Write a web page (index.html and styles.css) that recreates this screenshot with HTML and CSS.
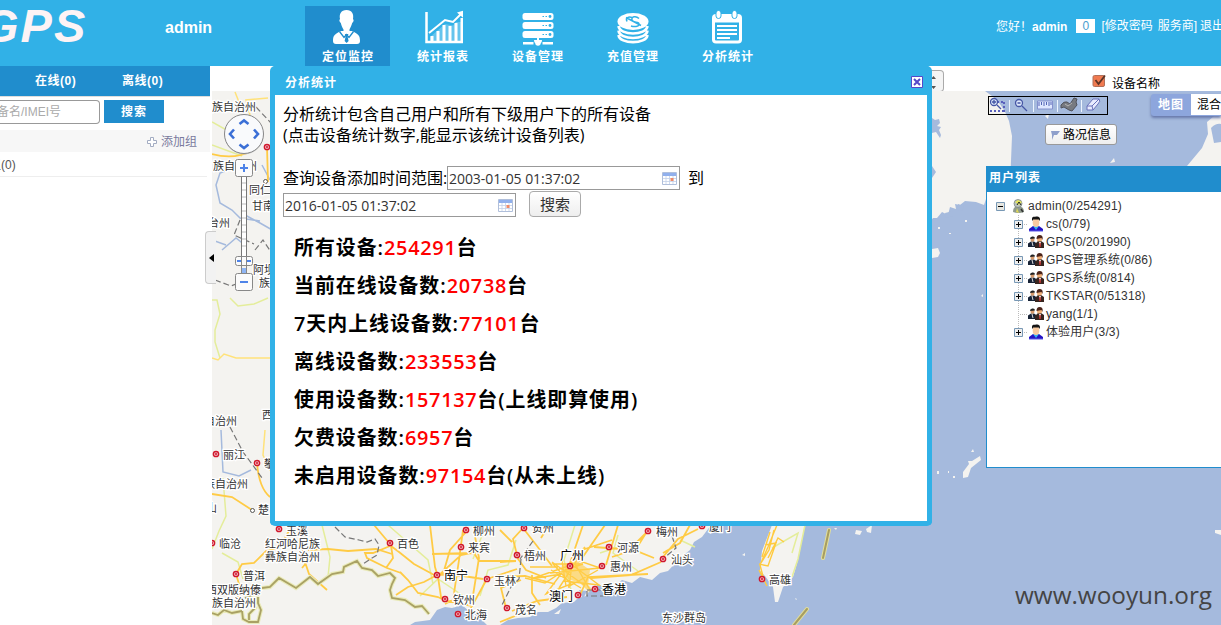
FILE: index.html
```html
<!DOCTYPE html>
<html lang="zh-CN">
<head>
<meta charset="utf-8">
<title>GPS</title>
<link rel="stylesheet" href="styles.css">
</head>
<body>
<svg class="defs" width="0" height="0">
  <defs>
    <g id="city"><circle r="2.600" fill="#fff" stroke="#d0182c" stroke-width="1.500"/><circle r="1.400" fill="#d84055"/></g>
    <path id="border" d="M262 588l8-1 9-9 17 10 14-11 8 7 14-10 11-2 1-5 13-6 5 7 10 2 6 6 12-3 5 5-3 6-2 6 2 8 13 2 10 7 7-1 7 8M212 613l6 2 6-5 8 3 10-2M245 598l8-3 7-1M252 594l-3 8 6 6-6 6v6M242 611l1 8 6 3h9l3-12-3-7 0-6"/>
    <symbol id="plus" viewBox="0 0 9 9"><path d="M.5.5h8v8h-8z" fill="#eee" stroke="#7898b5"/><path d="M2 4.5h5M4.500 2v5" stroke="#000"/></symbol>
    <symbol id="minus" viewBox="0 0 9 9"><path d="M.5.5h8v8h-8z" fill="#e6e6e0" stroke="#7898b5"/><path d="M2 4.500h5" stroke="#000"/></symbol>
    <symbol id="person" viewBox="0 0 16 16"><path d="M1 15v-2l4-3h6l4 3v2z" fill="#2413c4"/><path d="M5 10l3 4 3-4z" fill="#35b4ef"/><ellipse cx="8" cy="6.500" rx="3.300" ry="4.500" fill="#f8caa0"/><path d="M4.300 5C3 0 6 1 8 0.500c4 0 4.500 2 3.700 4.500l-1-1.500H5.300z" fill="#151515"/><path d="M1 15h14" stroke="#5b5be8"/></symbol>
    <symbol id="people" viewBox="0 0 16 16"><path d="M0 13V9.500l3-2h3l3 2V13z" fill="#172235"/><path d="M7 14v-4l3-3h3l3 2v5z" fill="#38251f"/><path d="M11 8h2l-1 4z" fill="#eee"/><path d="M12 9v4" stroke="#d33" stroke-width="1.300"/><circle cx="4.500" cy="5.800" r="2" fill="#d69a6d"/><path d="M2 5q0-3 3-2.500 2 0 2 2z" fill="#222"/><circle cx="11.500" cy="5" r="2.600" fill="#efb078"/><path d="M8.500 5q0-4 3-4 4 0 3 5l-1-2z" fill="#4b2318"/><path d="M4 8l1 4" stroke="#ddd"/></symbol>
    <symbol id="boss" viewBox="0 0 16 16"><path d="M3 14q0-6 5-5 6-1 6 5-5 2-11 0z" fill="#8f9a8d"/><circle cx="8" cy="5.500" r="4" fill="#b9c2be" stroke="#737a76" stroke-width=".7"/><path d="M5 4l3-2 4 2-3 3z" fill="#e4e45b"/><path d="M7 7l2-3 2 3" stroke="#222" fill="none"/><path d="M6 14l1-4 2 5z" fill="#ded85a"/><path d="M11 11l2 3" stroke="#333" stroke-width="1.500"/></symbol>
    <symbol id="calendar" viewBox="0 0 15 13"><path d="M.5.5h14v12H.5z" fill="#fff" stroke="#b0bfdb"/><path d="M1 1h13v3H1z" fill="#91b0ed"/><path d="M1 6.500h13M1 9.500h13M4 4v8M7.500 4v8M11 4v8" stroke="#c3d0e8" stroke-width=".8"/><path d="M8.500 6h3v3h-3z" fill="#ef8a68"/></symbol>
  </defs>
</svg>

<header class="top">
  <div class="logo">GPS</div>
  <div class="account">admin</div>
  <nav class="nav">
    <a class="nav-item active">
      <svg width="40" height="40" viewBox="0 0 40 40" fill="#fff"><path d="M18.500 4c5.500 0 7.500 4 6.500 9 1.200 1 .5 3-.8 4-.8 3-2 5-2.700 6.500v3h-6v-3c-1-1.500-2-3.500-2.700-6.500-1.300-1-2-3-.8-4-1-5 1-9 6.500-9z"/><path d="M13 25l4.500 13H8q-3 0-3-3c0-6 2-7 8-10zM24 25l-4.500 13H29q3 0 3-3c0-6-2-7-8-10z"/><path d="M13 25h11v6l-2.500 7h-6L13 31z"/><path d="M11.500 25.500l4.500 6 2.500-3 2.500 3 4.500-6" fill="none" stroke="#208dcd" stroke-width="1.300"/><path d="M17 28h3.400l-.8 2.500 1 4.500-2 2-2-2 1-4.500z" fill="#208dcd"/></svg>
      <span>定位监控</span></a>
    <a class="nav-item">
      <svg width="40" height="40" viewBox="0 0 40 40" fill="none" stroke="#fff"><path d="M3.500 6v30H41" stroke-width="2.500"/><path d="M6 27l16-13 8 2 8-8" stroke-width="2"/><path d="M34 6.500l7-2v8z" fill="#fff" stroke="none"/><path d="M7 35v-4l15-13 8 1.500 3-3.500h6V35z" fill="#fff" fill-opacity=".25" stroke="none"/><g stroke-width="3"><path d="M9 35v-5M15 35V25M21 35V19M27 35V20M33 35V17M39 35V12"/></g></svg>
      <span>统计报表</span></a>
    <a class="nav-item">
      <svg width="40" height="40" viewBox="0 0 40 40" fill="#fff"><rect x="4.500" y="7" width="31" height="7" rx="2.500"/><rect x="4.500" y="16" width="31" height="7" rx="2.500"/><rect x="4.500" y="25" width="31" height="7" rx="2.500"/><path d="M19 31h2v3h3a3 3 0 0 1-8 0h3zM5 36h10.500v2.500H5zM24.500 36H35v2.500H24.500z"/><circle cx="20" cy="37" r="2.700"/><g fill="#31b1e7"><path d="M24.500 10H26v1h-1.500zM27.500 10H29v1h-1.500zM24.500 19H26v1h-1.500zM27.500 19H29v1h-1.500zM24.500 28H26v1h-1.500zM27.500 28H29v1h-1.500z"/><circle cx="32" cy="10.500" r="1.400"/><circle cx="32" cy="19.500" r="1.400"/><circle cx="32" cy="28.500" r="1.400"/></g></svg>
      <span>设备管理</span></a>
    <a class="nav-item">
      <svg width="40" height="40" viewBox="0 0 40 40"><ellipse cx="20" cy="15.500" rx="15.500" ry="8.500" fill="#fff"/><g fill="none" stroke="#fff" stroke-width="2.600"><path d="M5.500 20c1 10 28 10 29 0M5.500 24.500c1 10 28 10 29 0M5.500 29c1 9.500 28 9.500 29 0"/></g><path d="M13 11.500l15 8M26 12.500c-3-3-8-2-7 1.500s7 1 7 4-5 3-8 2M14 15.500c-2-4 2-5 5-4" fill="none" stroke="#31b1e7" stroke-width="1.500"/></svg>
      <span>充值管理</span></a>
    <a class="nav-item">
      <svg width="40" height="40" viewBox="0 0 40 40"><rect x="4" y="8" width="30" height="29.500" rx="4" fill="#fff"/><path d="M7 16.500h24v17q0 1-1 1H8q-1 0-1-1z" fill="#31b1e7"/><path d="M9 20h20M9 24h20M9 28h20M9 32h13" stroke="#fff" stroke-width="1.900"/><g fill="#fff" stroke="#31b1e7"><rect x="8" y="4.500" width="5" height="8" rx="2.500"/><rect x="24" y="4.500" width="5" height="8" rx="2.500"/></g></svg>
      <span>分析统计</span></a>
  </nav>
  <div class="welcome"><span>您好<span class="bang">！</span><b>admin</b></span><i class="count">0</i><span>[修改密码</span><span class="svc">服务商]</span><span class="quit">退出]</span></div>
</header>

<div class="work">
  <aside class="side">
    <div class="tabs"><span class="tab-on">在线(0)</span><span>离线(0)</span></div>
    <div class="search"><div class="field">备名/IMEI号</div><div class="go">搜索</div></div>
    <div class="add"><svg width="10" height="10" viewBox="0 0 10 10"><path d="M3.500.500h3v3h3v3h-3v3h-3v-3h-3v-3h3z" fill="#fff" stroke="#a3acc2"/></svg><span>添加组</span></div>
    <div class="group">组(0)</div>
  </aside>

  <main class="main">
    <div class="bar">
      <div class="picker"><svg width="8" height="18" viewBox="0 0 8 18" fill="#555"><path d="M0 6l2.500-3L5 6zM0 13h5l-2.500 3z"/></svg></div>
      <div class="showname"><svg width="15" height="15" viewBox="0 0 15 15"><rect x="1" y="1.500" width="11.500" height="11" rx="1.500" fill="#f07a50" stroke="#b0705a"/><path d="M3.500 6l3 4 6.500-8.500" fill="none" stroke="#5c3426" stroke-width="1.800"/></svg><span>设备名称</span></div>
    </div>
    <div class="map">
      <svg class="canvas" width="1009" height="534" viewBox="212 91 1009 534">
        <rect x="212" y="91" width="1009" height="534" fill="#a5badd"/>
        <g fill="#f4f3f0">
          <path d="M212 91H985q17 10 24 30l3 15-2 50-20 10-3 0-3 9-8-3-11-1-5 4-5-1 1 5-6-2-2 8-6-3-5 6-4 0-6 8-4-2L711 525 702 537l-8 5-4 8-10 8-12 13-8 2-8 7-12-3-8 6-10-3-10 8-7-2-7 2-8 2-4 6-8 2-4 4-12 1-6 5-8 4h-10l-8 5-12 1-10 2-8 5h-13l-5-5-4-10-8 2-8-7-10 3-7-1-8 3-7 10-15 2-5 3H212z"/>
          <path d="M772 525h33l-7 35-5 17-10 10-5 15-3 0-2-15-8-11-5-5 2-20z"/>
          <path d="M1187 166l15-18 6-14-1-12 14-12v56z"/>
          <path d="M932 249l6-1 2 5-2 4-6 1zM963 478v-6l6-8-1-3 4 0 8-5 1 4-10 8-3 9zM971 452l2-3 1 3zM856 530l6 1-2 4-5-1zM866 529l6-4-1 8-4-1zM1110 163l4-5 1 4zM1045 116l4-2-1 5zM742 555l3-2v3zM795 598l2 1-1 1zM834 528h3l-1 2zM554 614l7-5-2 5zM1215 530h6v5l-6-2zM981 296l2-2v3zM937 471h2v3h-2zM948 471h1v2h-1zM953 476h2v2h-2zM938 227h2v2h-2zM965 220h2v2h-2zM949 233h2v1h-2z"/>
        </g>
        <g fill="#a5badd"><path d="M932 118l3 2 4-1 1 4-3 3 4 1-2 3 2 5-1 3-4-6-4 1zM932 166l4 6-4 6zM958 204l6 2-2 5-5-1zM945 213l8-2 0 5-7 2zM1211 128q5-5 10-4v18l-7 1zM596 583l8 4-5 5zM579 590l8 1-4 8z"/></g>
        <g fill="none" stroke="#a5badd" stroke-width="1.500"><path d="M228 170l-8 3-4 12 4 18 12 7 8 8 20 3M222 250l14-12 10 8M245 215l15 8 14 8M221 430l2 42 16 4 12-6M262 165l8 15M226 245l-14-5"/></g>
        <g fill="none" stroke="#e4ed9a" stroke-width="1.500"><path d="M212 122l18 10M212 145l30 11M212 300h5l3 14-5 16 0 12 5 16M230 298l8 8 16-2 14-6M223 478l3 38-7 15-7 18M222 553l16 9 5 17M322 525l8 32-2 20M388 525l40 35 5 24M486 525l-13 34M516 540l-8 25-20 5-8 26M575 525l-11 35 7 30M618 535l-5 18 25 18M680 540l15 7M772 548l26-15-6 20M420 596l18-17 30 20M600 553l30-10M805 525l-7 34-6 18"/></g>
        <g fill="none" stroke="#ffe27a" stroke-width="1.500"><path d="M212 358l6 2 6-6 12 4h34M250 115l-4-15 22-2M265 430l-2 25 12 25M235 92l4 10"/></g>
        <g fill="none" stroke="#ffcb45" stroke-width="1.800">
          <path d="M267 147l1 35M212 154q22 6 40-3M257 463q2 25 13 34M212 494l20 3 20 13M236 574l6-10 12-1 12-12 14-4 10-18M236 574l3 10-1 14 6 6M300 532l5 30 4 12 18 16M308 550l20-1 20 2 28-2 16 5M312 556l-10 12M390 546l-17 7-8 0 2 5 20 10 14 5M391 546l2 12-7 10M391 546l8 6 15 12 22 12M374 525l16 19M396 595l12-8 16-5 13-7M400 572l8 8 10 13 20 4 8 4M430 525l5 42 3 10 3 20 4 5M463 530l-4 30-6 40-8 4M466 532l-16 18-7 24M437 577l24-22 28-6M432 554l42-1 5 8M474 531l5 27-8 50M437 574l26 2 20 3M442 600l30 6 16-29M478 561h38M487 579l30-10M516 556l10 14 20 8M500 562l16-1M523 528l14 18 15 20M524 527l-11 12 4 16M549 525l-8 13M583 525l-13 38M605 525l-25 36M618 525l-6 20-6 20M612 540l-30 10M646 533l-10 16-24 8M661 562l-30 13-40 3M663 557l15-18 20-10M648 531l-20 20M500 577l25-1 30 8M512 611l25-10 30-4M506 608l-5-20 20-8M500 622l20-8M532 575l0 18 8 12M580 595l8-18 60-3M594 547l40 3 20 8M690 525l-10 18-17 10M585 547l-15 18M500 530l12 12"/>
        </g>
        <g class="dense"><path d="M525 578l20 5 20-13 18-6-30 0 18 20-25 10 15-20-30 5 40-14M561 555l5 31M573 555l-4 33M552 562l32 23M550 573l50-5M559 588l18-28 23 8M575 567l24 18-35-4M551 570l30 18M575 564l15 26M598 570l-30 17M530 567h28"/></g>
        <path d="M562 565l15-4 13 9-2 15 4 4-3 3-9-9-12-4-7-7z" fill="#ffce4c" fill-opacity=".65"/>
        <g class="dense"><path d="M777 525l-9 22-8 18 4 15M774 530l-5 20-8 13M765 545l11-2-8 23-9-2M762 557l8-25M768 558l10-20 6 4M759 570l8 16"/></g>
        <g fill="none"><use href="#border" stroke="#e9eab8" stroke-width="4"/><use href="#border" stroke="#a9a164" stroke-width="1.800"/></g>
        <g fill="none" stroke="#777" stroke-width="1.200" stroke-dasharray="6 3"><path d="M335 527l10 10 14 3 8 2 8-3 4 6-2 10-8 5-6 4M533 541l-13 18M521 559l-2 20-8 8-10 20M672 536l4 12-12 10M230 427l13 25 9 12 10 14M240 220l-6 15 20 9M255 250l8-10 10 15M215 280l16 6 10-4M256 107l15 16M587 590h20v6h-20z"/></g>
        <g stroke-linecap="round"><path d="M829 530l-6 28M807 609l-13 16" stroke="#e2df9a" stroke-width="4"/><path d="M829 530l-6 28M807 609l-13 16" stroke="#a79d61" stroke-width="2"/></g>
        <g transform="translate(4 4)">
          <use href="#city" x="263" y="143"/><use href="#city" x="212" y="450"/><use href="#city" x="253" y="459"/><use href="#city" x="208" y="539"/><use href="#city" x="232" y="570"/><use href="#city" x="275" y="525"/><use href="#city" x="386" y="539"/><use href="#city" x="462" y="526"/><use href="#city" x="457" y="543"/><use href="#city" x="433" y="571"/><use href="#city" x="483" y="575"/><use href="#city" x="441" y="595"/><use href="#city" x="454" y="610"/><use href="#city" x="503" y="604"/><use href="#city" x="520" y="524"/><use href="#city" x="513" y="551"/><use href="#city" x="566" y="562"/><use href="#city" x="605" y="543"/><use href="#city" x="598" y="562"/><use href="#city" x="591" y="585"/><use href="#city" x="574" y="591"/><use href="#city" x="644" y="527"/><use href="#city" x="659" y="555"/><use href="#city" x="698" y="522"/><use href="#city" x="758" y="575"/>
        </g>
        <g class="towns"><circle cx="252.500" cy="510.500" r="2"/><circle cx="265.500" cy="181.500" r="2"/></g>
        <g class="names">
          <text x="212" y="111">族自治州</text><text x="213" y="170">族自治州</text><text x="249" y="194">同仁</text><text x="252" y="210">甘南</text><text x="208" y="227">台州</text><text x="253" y="274">阿坝</text><text x="259" y="287">族</text>
          <text x="262" y="419">西</text><text x="204" y="425">自治州</text><text x="223" y="459">丽江</text><text x="264" y="468">攀</text><text x="204" y="488">族自治州</text><text x="206" y="512">山</text><text x="258" y="514">楚</text><text x="219" y="548">临沧</text><text x="243" y="580">普洱</text><text x="206" y="594">西双版纳傣</text><text x="212" y="607">族自治州</text>
          <text x="286" y="535">玉溪</text><text x="265" y="548">红河哈尼族</text><text x="265" y="561">彝族自治州</text><text x="397" y="548">百色</text><text x="473" y="535">柳州</text><text x="468" y="552">来宾</text><text x="494" y="585">玉林</text><text x="453" y="604">钦州</text><text x="465" y="619">北海</text><text x="515" y="614">茂名</text><text x="532" y="532">贺州</text><text x="524" y="560">梧州</text><text x="617" y="552">河源</text><text x="610" y="571">惠州</text><text x="656" y="536">梅州</text><text x="671" y="564">汕头</text><text x="709" y="531">厦门</text><text x="769" y="584">高雄</text><text x="662" y="622">东沙群岛</text>
          <g class="big"><text x="444" y="580">南宁</text><text x="560" y="560">广州</text><text x="602" y="594">香港</text><text x="549" y="601">澳门</text></g>
        </g>
      </svg>
      <svg class="nav-control" width="42" height="182" viewBox="0 0 42 182">
        <circle cx="21" cy="22" r="19.500" fill="#ccc"/><circle cx="21" cy="21" r="19.500" fill="#f9fafc" stroke="#888"/>
        <path d="M16.500 11l4.500-3.500 4.500 3.500M16.500 31.500l4.500 3.500 4.500-3.500M11 16.500L7 21l4 4.500M31 16.500l4 4.500-4 4.500" fill="none" stroke="#3b6fd6" stroke-width="2.600"/>
        <path d="M18.500 63h5v86h-5z" fill="#fff" stroke="#777"/><path d="M19 70h4M19 77h4M19 84h4M19 91h4M19 98h4M19 105h4M19 112h4M19 119h4M19 126h4M19 133h4" stroke="#bbb"/>
        <g fill="#fbfbfb" stroke="#888"><rect x="12.500" y="46.500" width="17" height="17" rx="2"/><rect x="12.500" y="160.500" width="17" height="17" rx="2"/><rect x="12.500" y="143.500" width="17" height="9" rx="2"/></g>
        <path d="M17 55h8M21 51v8M17 169h8M14 148h4M24 148h4" stroke="#4e83e8" stroke-width="2"/>
        <path d="M18.500 143v17M23.500 143v17" stroke="#888"/><path d="M19 155h4v5h-4z" fill="#8eb5f5"/>
      </svg>
      <div class="tools">
        <svg width="118" height="17" viewBox="0 0 118 17"><g fill="none" stroke="#4657a5" stroke-width="1.300"><path d="M1 14h15M15 5v10M8 5h8" stroke-dasharray="2 2" stroke="#5960bc" stroke-width="2"/><circle cx="5" cy="5" r="3.500" fill="#dce7fa"/><path d="M3 5h4M5 3v4M8 8l4 4"/><circle cx="30" cy="6" r="3.500" fill="#dce7fa"/><path d="M28.500 6h3M33 9l5 5"/></g><path d="M20.500 3v12M44.500 3v12M68.500 3v12M92.500 3v12" stroke="#edf5ff"/><path d="M48.500 4h15v8h-15z" fill="#dfe7ff" stroke="#8491ce"/><path d="M50 5v4M52.500 5v3M55 5v4M57.500 5v3M60 5v4M62 5v3" stroke="#5365b5"/><path d="M72 8q3-4 6-3l3 2 4-6 3 1-1 3 1 3-5 6-3-1-5-3-3 1z" fill="#777a80" stroke="#50535c"/><path d="M76 7l3 2 4-3" fill="none" stroke="#b4b4b4"/><path d="M98 9l6-7h6q2 2-1 5l-5 6h-6z" fill="#e8ebff" stroke="#6871ba"/><path d="M98 9h5l7-7M103 9l1 4" fill="none" stroke="#6871ba"/></svg>
      </div>
      <div class="types"><b>地图</b><span>混合</span></div>
      <div class="traffic"><svg width="11" height="12" viewBox="0 0 11 12"><path d="M1 2h9l-3 4H4l-2 5V6z" fill="#8e9fcb"/></svg><span>路况信息</span></div>
      <section class="users">
        <h2>用户列表</h2>
        <ul class="tree">
          <li class="root"><svg class="tog"><use href="#minus"/></svg><svg class="pic"><use href="#boss"/></svg><span>admin(0/254291)</span></li>
          <li><svg class="tog"><use href="#plus"/></svg><svg class="pic"><use href="#person"/></svg><span>cs(0/79)</span></li>
          <li><svg class="tog"><use href="#plus"/></svg><svg class="pic"><use href="#people"/></svg><span>GPS(0/201990)</span></li>
          <li><svg class="tog"><use href="#plus"/></svg><svg class="pic"><use href="#people"/></svg><span>GPS管理系统(0/86)</span></li>
          <li><svg class="tog"><use href="#plus"/></svg><svg class="pic"><use href="#people"/></svg><span>GPS系统(0/814)</span></li>
          <li><svg class="tog"><use href="#plus"/></svg><svg class="pic"><use href="#people"/></svg><span>TKSTAR(0/51318)</span></li>
          <li><svg class="tog"></svg><svg class="pic"><use href="#people"/></svg><span>yang(1/1)</span></li>
          <li class="last"><svg class="tog"><use href="#plus"/></svg><svg class="pic"><use href="#person"/></svg><span>体验用户(3/3)</span></li>
        </ul>
      </section>
      <div class="mark">www.wooyun.org</div>
    </div>
    <div class="collapse"><svg width="5" height="8" viewBox="0 0 5 8"><path d="M5 0v8L0 4z"/></svg></div>
  </main>
</div>

<section class="dialog">
  <header class="dialog-head"><h1>分析统计</h1><svg width="12" height="12" viewBox="0 0 12 12"><path d="M.5.5h11v11H.5z" fill="#fff" stroke="#5548c8"/><path d="M3 3l6 6M9 3L3 9" stroke="#5548c8" stroke-width="2"/></svg></header>
  <div class="dialog-body">
    <p>分析统计包含自己用户和所有下级用户下的所有设备</p>
    <p>(点击设备统计数字,能显示该统计设备列表)</p>
    <div class="range"><span class="caption">查询设备添加时间范围:</span><div class="date">2003-01-05 01:37:02<svg width="15" height="13"><use href="#calendar"/></svg></div><span class="to">到</span></div>
    <div class="range second"><div class="date">2016-01-05 01:37:02<svg width="15" height="13"><use href="#calendar"/></svg></div><div class="query">搜索</div></div>
    <ul class="stats">
      <li>所有设备:<em>254291</em>台</li>
      <li>当前在线设备数:<em>20738</em>台</li>
      <li>7天内上线设备数:<em>77101</em>台</li>
      <li>离线设备数:<em>233553</em>台</li>
      <li>使用设备数:<em>157137</em>台(上线即算使用)</li>
      <li>欠费设备数:<em>6957</em>台</li>
      <li>未启用设备数:<em>97154</em>台(从未上线)</li>
    </ul>
  </div>
</section>
</body>
</html>
```
FILE: styles.css
```css
* { box-sizing: border-box; }
body { margin: 0; width: 1221px; height: 625px; overflow: hidden; position: relative; background: #fff; font: 12px/18px "Liberation Sans", "Noto Sans CJK SC", sans-serif; color: #333; }
h1, h2, p, ul { margin: 0; padding: 0; }
li { list-style: none; }
svg { display: block; flex: none; }
.defs { position: absolute; }

.top { height: 66px; background: #31b1e7; display: flex; color: #fff; overflow: hidden; }
.logo { width: 165px; flex: none; padding-top: 4px; text-indent: -18px; font: italic bold 47px/44px "Liberation Sans", sans-serif; letter-spacing: 2px; color: #fdf3f5; }
.account { width: 140px; flex: none; padding-top: 19px; font-size: 16px; font-weight: bold; }
.nav { display: flex; gap: 10px; padding-top: 6px; flex: none; }
.nav-item { width: 85px; height: 60px; display: flex; flex-direction: column; align-items: center; font-weight: bold; letter-spacing: 1px; }
.nav-item span { margin-top: 2px; padding-left: 1px; font-size: 12px; line-height: 18px; }
.active { background: #208dcd; }
.welcome { margin-left: 226px; padding-top: 17px; display: flex; white-space: nowrap; flex: none; }
.bang { font-family: "Noto Sans CJK TC", sans-serif; }
.count { width: 19px; height: 14px; margin: 2px 6px 0 9px; background: #fff; color: #4a9ed0; font-style: normal; line-height: 14px; text-align: center; }
.svc { margin-left: 5px; }
.quit { margin-left: 3px; }

.work { display: flex; height: 559px; }
.side { width: 210px; flex: none; margin-right: 2px; }
.tabs { height: 31px; display: flex; background: #208dcd; border-bottom: 1px solid #ddd; color: #fff; font-weight: bold; line-height: 31px; letter-spacing: .5px; padding-left: 35px; }
.tab-on { width: 87px; }
.search { display: flex; gap: 4px; padding: 3px 0 6px; }
.field { width: 100px; height: 24px; border: 1px solid #999; border-left: 0; border-radius: 0 4px 4px 0; color: #aaa; line-height: 23px; text-indent: -3px; overflow: hidden; white-space: nowrap; }
.go { width: 60px; height: 23px; background: #208dcd; color: #fff; font-weight: bold; text-align: center; line-height: 24px; letter-spacing: 1px; }
.add { height: 22px; background: #f7f7f7; display: flex; align-items: center; justify-content: flex-end; gap: 4px; padding: 2px 13px 0 0; color: #7a7a9d; }
.group { width: 207px; height: 25px; border-bottom: 1px solid #eee; line-height: 26px; text-indent: -11px; overflow: hidden; color: #555; }

.main { flex: 1; min-width: 0; position: relative; }
.bar { height: 25px; display: flex; padding-left: 719px; }
.picker { width: 13px; height: 22px; margin-top: 4px; border: 1px solid #aaa; border-left: 0; border-radius: 0 4px 4px 0; background: #f4f4f4; padding: 2px 0 0; }
.showname { margin-left: 148px; padding-top: 8px; display: flex; gap: 5px; color: #000; }
.showname span { padding-top: 1px; }
.map { position: relative; height: 534px; }
.dense { fill: none; stroke: #ffca3f; stroke-width: 1.4; }
.towns circle { fill: #fff; stroke: #555; }
.names text { font: 11px "Noto Sans CJK SC", sans-serif; fill: #333; stroke: #fff; stroke-width: 2.5px; paint-order: stroke; }
.names .big text { font-size: 12px; fill: #000; }
.nav-control { position: absolute; left: 11px; top: 22px; }
.collapse { position: absolute; left: -7px; top: 165px; width: 11px; height: 53px; border: 1px solid #ccc; border-right: 0; border-radius: 4px 0 0 4px; background: #f2f2f2; display: flex; align-items: center; justify-content: flex-end; padding-right: 2px; }
.tools { position: absolute; left: 776px; top: 5px; width: 120px; height: 19px; border: 1px solid #000; }
.types { position: absolute; left: 939px; top: 3px; width: 70px; height: 22px; display: flex; line-height: 22px; background: #8da6dd; border-radius: 3px 0 0 3px; box-shadow: 0 2px 3px #6677aa; overflow: hidden; color: #000; }
.types b { width: 40px; text-align: center; color: #fff; letter-spacing: 1px; }
.types span { flex: 1; height: 21px; background: #fff; padding-left: 6px; white-space: nowrap; }
.traffic { position: absolute; left: 833px; top: 33px; width: 72px; height: 21px; border: 1px solid #999; border-radius: 3px; background: linear-gradient(#fff, #eee); display: flex; align-items: center; gap: 2px; padding-left: 4px; color: #000; white-space: nowrap; }
.users { position: absolute; left: 774px; top: 75px; width: 240px; height: 302px; background: #fff; border: 1px solid #208dcd; }
.users h2 { height: 25px; background: #208dcd; color: #fff; font-size: 12px; line-height: 22px; letter-spacing: 1px; padding-left: 2px; }
.tree { padding: 5px 0 0 9px; letter-spacing: .12px; }
.tree li { height: 18px; display: flex; align-items: center; padding-left: 18px; background: repeating-linear-gradient(#bbb 0 1px, transparent 1px 2px) 22px 0 / 1px 18px no-repeat, repeating-linear-gradient(90deg, #bbb 0 1px, transparent 1px 2px) 24px 9px / 8px 1px no-repeat; }
.tree .root { padding-left: 0; background: none; letter-spacing: .22px; }
.tree .last { background-size: 1px 9px, 8px 1px; }
.tog { width: 9px; height: 9px; margin-right: 5px; }
.pic { width: 16px; height: 16px; margin-right: 2px; }
.mark { position: absolute; left: 803px; top: 489px; font: 24.3px/30px "Open Sans", sans-serif; color: #444; white-space: nowrap; }

.dialog { position: absolute; left: 270px; top: 66px; width: 662px; height: 460px; border: 5px solid #31b1e7; border-top: 0; border-radius: 5px; background: #31b1e7; color: #000; }
.dialog-head { height: 29px; display: flex; align-items: center; justify-content: space-between; padding: 3px 4px 0 10px; color: #fff; }
.dialog-head h1 { padding-top: 1px; font-size: 12px; letter-spacing: 1px; }
.dialog-body { height: 426px; background: #fff; padding: 9px 0 0 8px; font: 16px/21px "Open Sans", "Noto Sans CJK SC", sans-serif; }
.range { display: flex; align-items: center; height: 24px; margin-top: 20px; }
.second { margin-top: 3px; }
.caption { width: 164px; white-space: nowrap; }
.date { width: 233px; height: 24px; border: 1px solid #999; display: flex; align-items: center; justify-content: space-between; padding: 0 1px 0 1px; font-size: 14px; letter-spacing: -.05px; color: #333; white-space: nowrap; }
.date svg { margin-right: 1px; }
.to { margin-left: 8px; }
.query { width: 52px; height: 26px; margin-left: 13px; margin-top: -2px; border: 1px solid #aaa; border-radius: 4px; background: linear-gradient(#fff, #eee); font-size: 15px; line-height: 25px; text-align: center; color: #333; }
.stats { padding: 12px 0 0 11px; }
.stats li { height: 38px; font: 600 19.9px/38px "Open Sans", "Noto Sans CJK SC", sans-serif; letter-spacing: 1px; white-space: nowrap; }
.stats em { font-style: normal; color: #f00; letter-spacing: .7px; }
```
